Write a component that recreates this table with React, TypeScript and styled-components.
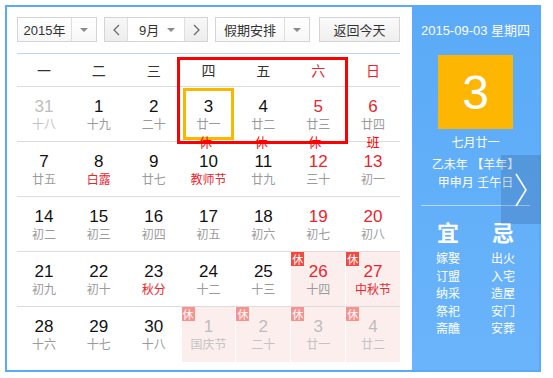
import React from "react";
import styled, { createGlobalStyle } from "styled-components";

type Tone = "normal" | "weekend" | "muted";

interface DayCell {
  n: number;
  lunar: string;
  tone?: Tone;
  lunarRed?: boolean;
  rest?: "on" | "faded";
  mark?: string;
  markShift?: number;
  selected?: boolean;
}

const WEEKDAYS = ["一", "二", "三", "四", "五", "六", "日"];

const WEEKS: DayCell[][] = [
  [
    { n: 31, lunar: "十八", tone: "muted" },
    { n: 1, lunar: "十九" },
    { n: 2, lunar: "二十" },
    { n: 3, lunar: "廿一", selected: true, mark: "休", markShift: -6 },
    { n: 4, lunar: "廿二", mark: "休", markShift: -4 },
    { n: 5, lunar: "廿三", tone: "weekend", mark: "休", markShift: -7 },
    { n: 6, lunar: "廿四", tone: "weekend", mark: "班" },
  ],
  [
    { n: 7, lunar: "廿五" },
    { n: 8, lunar: "白露", lunarRed: true },
    { n: 9, lunar: "廿七" },
    { n: 10, lunar: "教师节", lunarRed: true },
    { n: 11, lunar: "廿九" },
    { n: 12, lunar: "三十", tone: "weekend" },
    { n: 13, lunar: "初一", tone: "weekend" },
  ],
  [
    { n: 14, lunar: "初二" },
    { n: 15, lunar: "初三" },
    { n: 16, lunar: "初四" },
    { n: 17, lunar: "初五" },
    { n: 18, lunar: "初六" },
    { n: 19, lunar: "初七", tone: "weekend" },
    { n: 20, lunar: "初八", tone: "weekend" },
  ],
  [
    { n: 21, lunar: "初九" },
    { n: 22, lunar: "初十" },
    { n: 23, lunar: "秋分", lunarRed: true },
    { n: 24, lunar: "十二" },
    { n: 25, lunar: "十三" },
    { n: 26, lunar: "十四", tone: "weekend", rest: "on" },
    { n: 27, lunar: "中秋节", tone: "weekend", lunarRed: true, rest: "on" },
  ],
  [
    { n: 28, lunar: "十六" },
    { n: 29, lunar: "十七" },
    { n: 30, lunar: "十八" },
    { n: 1, lunar: "国庆节", tone: "muted", rest: "faded" },
    { n: 2, lunar: "二十", tone: "muted", rest: "faded" },
    { n: 3, lunar: "廿一", tone: "muted", rest: "faded" },
    { n: 4, lunar: "廿二", tone: "muted", rest: "faded" },
  ],
];

const YI = ["嫁娶", "订盟", "纳采", "祭祀", "斋醮"];
const JI = ["出火", "入宅", "造屋", "安门", "安葬"];

export default function App() {
  return (
    <>
      <GlobalStyle />
      <Frame>
        <Main>
          <Toolbar>
            <Select width={80}>
              <SelectLabel>2015年</SelectLabel>
              <SelectArrow>
                <Caret />
              </SelectArrow>
            </Select>
            <MonthGroup>
              <StepButton>
                <Chevron dir="left" />
              </StepButton>
              <MonthLabel>
                <span>9月</span>
                <Caret />
              </MonthLabel>
              <StepButton last>
                <Chevron dir="right" />
              </StepButton>
            </MonthGroup>
            <Select width={95}>
              <SelectLabel>假期安排</SelectLabel>
              <SelectArrow>
                <Caret />
              </SelectArrow>
            </Select>
            <TodayButton>返回今天</TodayButton>
          </Toolbar>

          <WeekHeader>
            {WEEKDAYS.map((w, i) => (
              <WeekDay key={w} weekend={i >= 5}>
                {w}
              </WeekDay>
            ))}
          </WeekHeader>

          {WEEKS.map((week, wi) => (
            <WeekRow key={wi} last={wi === WEEKS.length - 1}>
              {week.map((d, di) => (
                <Cell key={di} rest={d.rest} selected={d.selected}>
                  {d.rest && <RestBadge faded={d.rest === "faded"}>休</RestBadge>}
                  <DayNum tone={d.tone || "normal"}>{d.n}</DayNum>
                  <Lunar red={d.lunarRed} muted={d.tone === "muted"}>
                    {d.lunar}
                  </Lunar>
                  {d.mark && (
                    <DayMark style={{ marginLeft: d.markShift || 0 }}>
                      {d.mark}
                    </DayMark>
                  )}
                </Cell>
              ))}
            </WeekRow>
          ))}
        </Main>

        <Side>
          <DateLine>2015-09-03 星期四</DateLine>
          <BigDay>3</BigDay>
          <LunarLine top={6}>七月廿一</LunarLine>
          <LunarLine top={6}>乙未年 【羊年】</LunarLine>
          <LunarLine top={2}>甲申月 壬午日</LunarLine>
          <SideDivider />
          <Almanac>
            <AlmanacCol>
              <AlmanacHead>宜</AlmanacHead>
              {YI.map((t) => (
                <AlmanacItem key={t}>{t}</AlmanacItem>
              ))}
            </AlmanacCol>
            <AlmanacCol>
              <AlmanacHead>忌</AlmanacHead>
              {JI.map((t) => (
                <AlmanacItem key={t}>{t}</AlmanacItem>
              ))}
            </AlmanacCol>
          </Almanac>
          <NextDay>
            <svg width="14" height="36" viewBox="0 0 14 36">
              <polyline
                points="2,2 12,18 2,34"
                fill="none"
                stroke="#fff"
                strokeWidth="1.6"
              />
            </svg>
          </NextDay>
        </Side>

        {/* 标注框 */}
        <Annotation />
      </Frame>
    </>
  );
}

function Caret() {
  return <CaretShape />;
}

function Chevron({ dir }: { dir: "left" | "right" }) {
  return (
    <svg width="7" height="12" viewBox="0 0 7 12">
      <polyline
        points={dir === "left" ? "6,1 1,6 6,11" : "1,1 6,6 1,11"}
        fill="none"
        stroke="#666"
        strokeWidth="1.2"
      />
    </svg>
  );
}

const GlobalStyle = createGlobalStyle`
  body {
    margin: 0;
    background: #fff;
    font-family: "Liberation Sans", Arial, "Noto Sans CJK SC", sans-serif;
  }
`;

const BLUE = "#5aaaf7";

const Frame = styled.div`
  position: relative;
  display: flex;
  box-sizing: border-box;
  width: 536px;
  height: 367px;
  margin: 5px 0 0 5px;
  border: 2px solid ${BLUE};
`;

const Main = styled.div`
  width: 405px;
  box-sizing: border-box;
  padding: 10px 12px 0 10px;
  background: #fff;
`;

const Toolbar = styled.div`
  display: flex;
  align-items: center;
  height: 25px;
  gap: 7px;
`;

const Select = styled.div<{ width: number }>`
  display: flex;
  box-sizing: border-box;
  width: ${(p) => p.width}px;
  height: 25px;
  border: 1px solid #d4d4d4;
  background: linear-gradient(#ffffff, #f7f7f7);
`;

const SelectLabel = styled.div`
  flex: 1;
  display: flex;
  align-items: center;
  justify-content: center;
  font-size: 13px;
  color: #333;
`;

const SelectArrow = styled.div`
  width: 24px;
  display: flex;
  align-items: center;
  justify-content: center;
  border-left: 1px solid #dedede;
`;

const CaretShape = styled.span`
  display: inline-block;
  width: 0;
  height: 0;
  border-left: 4px solid transparent;
  border-right: 4px solid transparent;
  border-top: 4px solid #8a8a8a;
`;

const MonthGroup = styled.div`
  display: flex;
  box-sizing: border-box;
  width: 104px;
  height: 25px;
  border: 1px solid #d4d4d4;
  background: #fff;
`;

const StepButton = styled.div<{ last?: boolean }>`
  width: 22px;
  display: flex;
  align-items: center;
  justify-content: center;
  background: linear-gradient(#f8f8f8, #ececec);
  border-left: ${(p) => (p.last ? "1px solid #dedede" : "none")};
  border-right: ${(p) => (p.last ? "none" : "1px solid #dedede")};
`;

const MonthLabel = styled.div`
  flex: 1;
  display: flex;
  align-items: center;
  justify-content: space-between;
  padding: 0 9px 0 11px;
  font-size: 13px;
  color: #333;
`;

const TodayButton = styled.div`
  margin-left: 2px;
  box-sizing: border-box;
  width: 81px;
  height: 25px;
  display: flex;
  align-items: center;
  justify-content: center;
  border: 1px solid #d4d4d4;
  background: linear-gradient(#fafafa, #efefef);
  font-size: 13px;
  color: #333;
`;

const WeekHeader = styled.div`
  margin-top: 11px;
  box-sizing: border-box;
  height: 34px;
  display: grid;
  grid-template-columns: repeat(7, 1fr);
  column-gap: 1px;
  border-top: 1px solid #b7d8f6;
  border-bottom: 1px solid #dcdcdc;
`;

const WeekDay = styled.div<{ weekend: boolean }>`
  display: flex;
  align-items: center;
  justify-content: center;
  font-size: 14px;
  color: ${(p) => (p.weekend ? "#e8262d" : "#333")};
`;

const WeekRow = styled.div<{ last: boolean }>`
  box-sizing: border-box;
  height: 55px;
  display: grid;
  grid-template-columns: repeat(7, 1fr);
  column-gap: 1px;
  border-bottom: ${(p) => (p.last ? "none" : "1px solid #dcdcdc")};
`;

const Cell = styled.div<{ rest?: "on" | "faded"; selected?: boolean }>`
  position: relative;
  display: flex;
  flex-direction: column;
  align-items: center;
  padding-top: 10px;
  box-sizing: border-box;
  background: ${(p) => (p.rest ? "#fdeeee" : "transparent")};
  box-shadow: ${(p) =>
    p.selected ? "inset 0 0 0 1px #fff, inset 0 0 0 4px #fab700" : "none"};
`;

const RestBadge = styled.span<{ faded: boolean }>`
  position: absolute;
  left: 0;
  top: 0;
  width: 13px;
  height: 14px;
  display: flex;
  align-items: center;
  justify-content: center;
  font-size: 11px;
  color: #fff;
  background: ${(p) => (p.faded ? "#f8928f" : "#f24a40")};
`;

const toneColor: Record<Tone, string> = {
  normal: "#111",
  weekend: "#e8262d",
  muted: "#bdbdbd",
};

const DayNum = styled.div<{ tone: Tone }>`
  font-size: 17px;
  line-height: 20px;
  color: ${(p) => toneColor[p.tone]};
`;

const Lunar = styled.div<{ red?: boolean; muted?: boolean }>`
  margin-top: 1px;
  font-size: 12px;
  line-height: 15px;
  color: ${(p) => (p.red ? "#e8262d" : p.muted ? "#c4c4c4" : "#9a9a9a")};
`;

const DayMark = styled.span`
  position: absolute;
  top: 49px;
  font-size: 13px;
  line-height: 14px;
  color: #f00;
`;

const Side = styled.div`
  position: relative;
  flex: 1;
  display: flex;
  flex-direction: column;
  align-items: center;
  padding-top: 16px;
  background: linear-gradient(${BLUE}, #6ab4fb);
  color: #fff;
`;

const DateLine = styled.div`
  font-size: 13px;
  line-height: 15px;
`;

const BigDay = styled.div`
  margin-top: 17px;
  width: 75px;
  height: 74px;
  display: flex;
  align-items: center;
  justify-content: center;
  background: #fdb601;
  font-size: 48px;
  color: #fff;
`;

const LunarLine = styled.div<{ top: number }>`
  margin-top: ${(p) => p.top}px;
  font-size: 12px;
  line-height: 16px;
  white-space: nowrap;
`;

const SideDivider = styled.div`
  margin-top: 14px;
  width: 109px;
  height: 1px;
  background: rgba(255, 255, 255, 0.55);
`;

const Almanac = styled.div`
  margin-top: 15px;
  display: flex;
  gap: 15px;
`;

const AlmanacCol = styled.div`
  width: 40px;
  display: flex;
  flex-direction: column;
  align-items: center;
`;

const AlmanacHead = styled.div`
  font-size: 22px;
  line-height: 26px;
  font-weight: bold;
  margin-bottom: 4px;
`;

const AlmanacItem = styled.div`
  font-size: 12px;
  line-height: 17.5px;
`;

const NextDay = styled.div`
  position: absolute;
  right: -2px;
  top: 148px;
  width: 40px;
  height: 69px;
  display: flex;
  align-items: center;
  justify-content: center;
  background: rgba(30, 60, 110, 0.2);
`;

const Annotation = styled.div`
  position: absolute;
  left: 170px;
  top: 50px;
  width: 171px;
  height: 87px;
  box-sizing: border-box;
  border: 3px solid #f00;
  pointer-events: none;
`;
